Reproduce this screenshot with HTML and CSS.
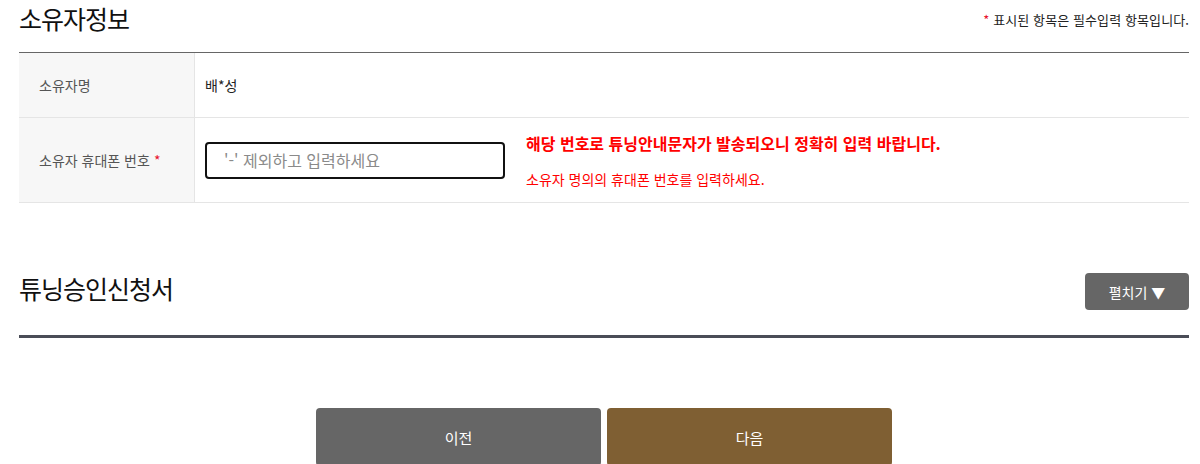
FILE: index.html
```html
<!DOCTYPE html>
<html lang="ko">
<head>
    <meta charset="UTF-8">
    <meta name="viewport" content="width=device-width, initial-scale=1.0">
    <title>소유자정보</title>
    <link rel="stylesheet" href="styles.css">
</head>
<body>
    <div id="page">
        <div class="section-head owner-head">
            <h2 class="section-title">소유자정보</h2>
            <p class="required-note"><span class="star">*</span> 표시된 항목은 필수입력 항목입니다.</p>
        </div>

        <div class="form-table">
            <div class="form-row">
                <div class="form-label">소유자명</div>
                <div class="form-value">배*성</div>
            </div>
            <div class="form-row phone-row">
                <div class="form-label">소유자 휴대폰 번호 <span class="star">*</span></div>
                <div class="form-value">
                    <input type="text" class="phone-input" placeholder="'-' 제외하고 입력하세요">
                    <div class="phone-help">
                        <p class="help-strong">해당 번호로 튜닝안내문자가 발송되오니 정확히 입력 바랍니다.</p>
                        <p class="help-small">소유자 명의의 휴대폰 번호를 입력하세요.</p>
                    </div>
                </div>
            </div>
        </div>

        <div class="section-head apply-head">
            <h2 class="section-title">튜닝승인신청서</h2>
            <button class="toggle-button">펼치기 ▼</button>
        </div>

        <div class="step-buttons">
            <button class="step-button prev-button">이전</button>
            <button class="step-button next-button">다음</button>
        </div>
    </div>
</body>
</html>
```

FILE: styles.css
```css
body {
    font-family: "Noto Sans CJK KR", "Noto Sans", sans-serif;
    margin: 0;
    padding: 0;
    background-color: #fff;
    color: #222;
}

#page {
    padding: 0 11px 0 19px;
}

.section-head {
    display: flex;
    justify-content: space-between;
    align-items: flex-start;
}

.section-title {
    margin: 0;
    font-size: 25px;
    font-weight: normal;
    line-height: 36px;
    letter-spacing: -1px;
    color: #111;
}

.owner-head {
    height: 52px;
    border-bottom: 1px solid #666;
}

.required-note {
    margin: 11px 0 0;
    font-size: 13px;
    line-height: 18px;
    letter-spacing: 0.1px;
    color: #222;
}

.star {
    color: #e8112d;
}

.form-row {
    display: flex;
    border-bottom: 1px solid #e5e5e5;
    height: 64px;
}

.phone-row {
    height: 84px;
}

.form-label {
    width: 155px;
    padding-left: 20px;
    background-color: #f7f7f7;
    border-right: 1px solid #e5e5e5;
    display: flex;
    align-items: center;
    gap: 4px;
    font-size: 14px;
    color: #555;
}

.form-value {
    flex: 1;
    display: flex;
    align-items: center;
    padding-left: 10px;
    font-size: 14px;
    color: #222;
}

.phone-input {
    width: 300px;
    height: 37px;
    box-sizing: border-box;
    border: 2px solid #111;
    border-radius: 4px;
    padding: 0 17px;
    font-family: inherit;
    font-size: 16px;
    outline: none;
}

.phone-input::placeholder {
    color: #8a8a8a;
}

.phone-help {
    margin-left: 21px;
    color: #ff0000;
}

.help-strong {
    margin: 0 0 17px;
    font-size: 16px;
    font-weight: bold;
    line-height: 20px;
}

.help-small {
    margin: 0;
    font-size: 14px;
    line-height: 18px;
}

.apply-head {
    margin-top: 70px;
    height: 62px;
    border-bottom: 3px solid #4a4d57;
}

.apply-head .section-title {
    margin-top: -3px;
}

.toggle-button {
    border: none;
    background-color: #666;
    color: #fff;
    font-family: inherit;
    font-size: 14px;
    width: 104px;
    height: 37px;
    border-radius: 4px;
    cursor: pointer;
}

.step-buttons {
    display: flex;
    justify-content: center;
    gap: 6px;
    margin-top: 70px;
}

.step-button {
    border: none;
    width: 285px;
    height: 58px;
    border-radius: 4px;
    color: #fff;
    font-family: inherit;
    font-size: 15px;
    cursor: pointer;
}

.prev-button {
    background-color: #666;
}

.next-button {
    background-color: #7f5f33;
}
```
